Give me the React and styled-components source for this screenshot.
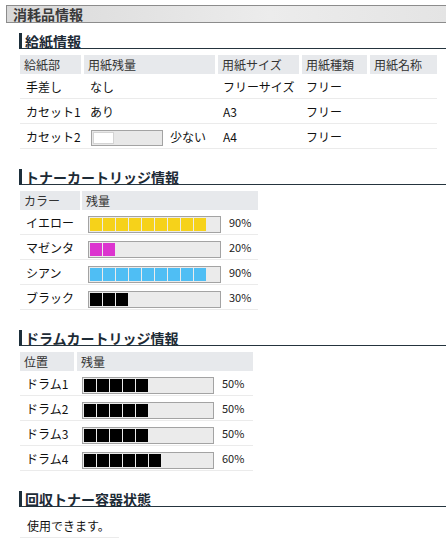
import React from 'react'
import styled, { createGlobalStyle } from 'styled-components'

const GlobalStyle = createGlobalStyle`
  html, body {
    margin: 0;
    padding: 0;
    background: #fff;
  }
  body {
    font-family: "Noto Sans CJK JP", "Liberation Sans", sans-serif;
    font-size: 12px;
    color: #222;
  }
`

const paper = [
  { slot: '手差し', level: 'なし', size: 'フリーサイズ', type: 'フリー', name: '' },
  { slot: 'カセット1', level: 'あり', size: 'A3', type: 'フリー', name: '' },
  { slot: 'カセット2', low: true, level: '少ない', size: 'A4', type: 'フリー', name: '' },
]

const toner = [
  { name: 'イエロー', color: '#f6d21a', pct: 90 },
  { name: 'マゼンタ', color: '#dc34cf', pct: 20 },
  { name: 'シアン', color: '#4fbef4', pct: 90 },
  { name: 'ブラック', color: '#000', pct: 30 },
]

const drums = [
  { name: 'ドラム1', pct: 50 },
  { name: 'ドラム2', pct: 50 },
  { name: 'ドラム3', pct: 50 },
  { name: 'ドラム4', pct: 60 },
]

const Page = styled.div`
  padding: 5px 0 0 6px;
  overflow: hidden;
`

const TitleBar = styled.div`
  height: 16px;
  line-height: 16px;
  border: 1px solid #8c8c8c;
  border-right: none;
  background: linear-gradient(to right, #d9d9d9, #ececec 60%, #e4e4e4);
  padding-left: 6px;
  font-size: 14px;
  font-weight: bold;
  color: #3a3a3a;
`

const Body = styled.div`
  padding: 10px 0 0 13px;
`

const Section = styled.section`
  margin-bottom: 20px;
  &:last-child {
    margin-bottom: 0;
  }
`

const Heading = styled.h2`
  margin: 0;
  height: 15px;
  line-height: 16px;
  border-left: 3px solid #1d2f3b;
  border-bottom: 1px solid #25343e;
  padding-left: 3px;
  font-size: 14px;
  font-weight: bold;
  color: #1d2b36;
  white-space: nowrap;
`

const Table = styled.div`
  margin: 6px 0 0 1px;
  width: ${p => p.width}px;
`

const HeadRow = styled.div`
  display: grid;
  grid-template-columns: ${p => p.cols};
  column-gap: ${p => p.gap || 3}px;
`

const HeadCell = styled.div`
  height: 19px;
  line-height: 19px;
  background: #e7e9ec;
  padding-left: 4px;
  color: #333;
  white-space: nowrap;
`

const Row = styled.div`
  display: grid;
  grid-template-columns: ${p => p.cols};
  column-gap: ${p => p.gap || 3}px;
  height: 24px;
  border-bottom: 1px solid #ebebeb;
  align-items: center;
`

const Cell = styled.div`
  padding-left: ${p => p.pad || 6}px;
  display: flex;
  align-items: center;
  white-space: nowrap;
  color: #111;
`

const Gauge = styled.div`
  width: ${p => p.width}px;
  height: 17px;
  box-sizing: border-box;
  border: 1px solid #a3a3a3;
  background: #ebebeb;
  padding: 1px;
  display: flex;
  gap: 1px;
  margin-top: 4px;
`

const Segment = styled.div`
  width: 12px;
  height: 100%;
  background: ${p => p.color};
`

const Pct = styled.span`
  margin-left: 8px;
  font-size: 11px;
  color: #222;
`

const SmallGauge = styled.div`
  width: 72px;
  height: 16px;
  box-sizing: border-box;
  border: 1px solid #a3a3a3;
  background: #e8e8e8;
  padding: 1px;
  margin: 3px 7px 0 0;
`

const Remaining = styled.div`
  width: 21px;
  height: 100%;
  box-sizing: border-box;
  background: #fff;
  border: 1px solid #d4d4d4;
`

const Level = ({ pct, color, width }) => (
  <>
    <Gauge width={width}>
      {Array.from({ length: pct / 10 }, (_, i) => (
        <Segment key={i} color={color} />
      ))}
    </Gauge>
    <Pct>{pct}%</Pct>
  </>
)

const paperCols = '61px 131px 81px 65px 67px'
const tonerCols = '60px 176px'
const drumCols = '54px 176px'

export default function App() {
  return (
    <Page>
      <GlobalStyle />
      <TitleBar>消耗品情報</TitleBar>
      <Body>
        <Section>
          <Heading>給紙情報</Heading>
          <Table width={417}>
            <HeadRow cols={paperCols}>
              <HeadCell>給紙部</HeadCell>
              <HeadCell>用紙残量</HeadCell>
              <HeadCell>用紙サイズ</HeadCell>
              <HeadCell>用紙種類</HeadCell>
              <HeadCell>用紙名称</HeadCell>
            </HeadRow>
            {paper.map(r => (
              <Row key={r.slot} cols={paperCols}>
                <Cell>{r.slot}</Cell>
                <Cell pad={r.low ? 7 : 6}>
                  {r.low && (
                    <SmallGauge>
                      <Remaining />
                    </SmallGauge>
                  )}
                  {r.level}
                </Cell>
                <Cell pad={5}>{r.size}</Cell>
                <Cell pad={4}>{r.type}</Cell>
                <Cell>{r.name}</Cell>
              </Row>
            ))}
          </Table>
        </Section>

        <Section>
          <Heading>トナーカートリッジ情報</Heading>
          <Table width={238}>
            <HeadRow cols={tonerCols} gap={2}>
              <HeadCell>カラー</HeadCell>
              <HeadCell>残量</HeadCell>
            </HeadRow>
            {toner.map(t => (
              <Row key={t.name} cols={tonerCols} gap={2}>
                <Cell>{t.name}</Cell>
                <Cell>
                  <Level pct={t.pct} color={t.color} width={133} />
                </Cell>
              </Row>
            ))}
          </Table>
        </Section>

        <Section>
          <Heading>ドラムカートリッジ情報</Heading>
          <Table width={233}>
            <HeadRow cols={drumCols}>
              <HeadCell>位置</HeadCell>
              <HeadCell>残量</HeadCell>
            </HeadRow>
            {drums.map(d => (
              <Row key={d.name} cols={drumCols}>
                <Cell>{d.name}</Cell>
                <Cell pad={5}>
                  <Level pct={d.pct} color="#000" width={132} />
                </Cell>
              </Row>
            ))}
          </Table>
        </Section>

        <Section>
          <Heading>回収トナー容器状態</Heading>
          <Table width={99}>
            <Row cols="99px">
              <Cell pad={7}>使用できます。</Cell>
            </Row>
          </Table>
        </Section>
      </Body>
    </Page>
  )
}
